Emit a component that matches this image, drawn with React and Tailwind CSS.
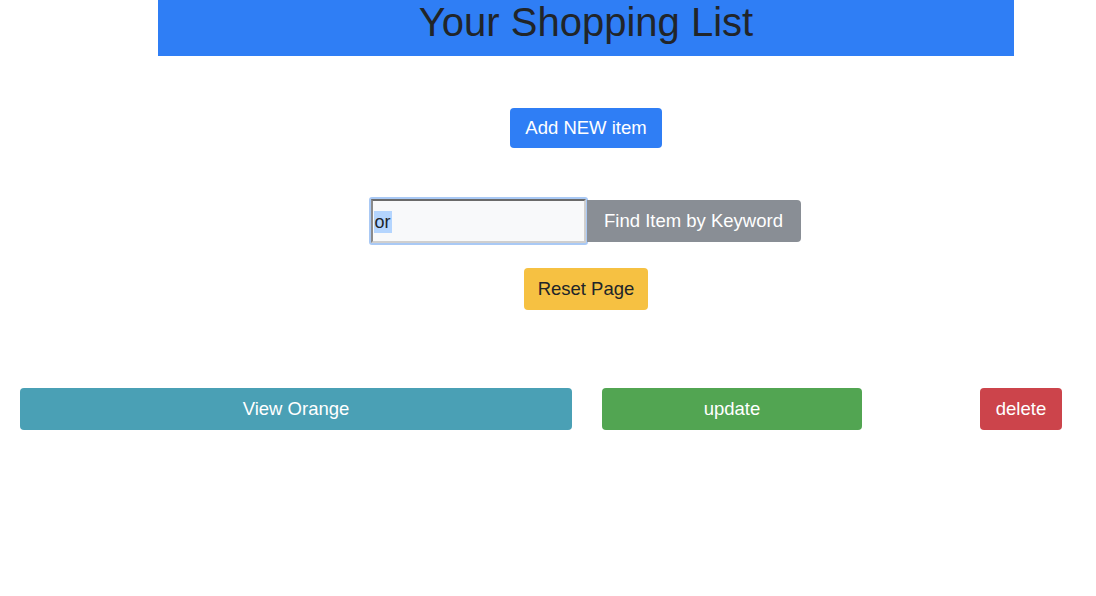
import React from "react";

const font = { fontFamily: '"Liberation Sans", Arial, sans-serif' };

const App = () => {
  return (
    <div className="w-[1096px] h-[596px] bg-white overflow-hidden text-[#212529]" style={font}>
      {/* Header */}
      <div className="ml-[158px] w-[856px] h-[56px] bg-[#2f7ef5] flex justify-center">
        <h1 className="text-[40px] leading-[44px]">Your Shopping List</h1>
      </div>

      <div className="ml-[158px] w-[856px] flex flex-col items-center">
        {/* Add */}
        <button className="mt-[52px] h-[40px] px-[15px] rounded-[4px] bg-[#2f7ef5] text-white text-[18.5px] leading-none">
          Add NEW item
        </button>

        {/* Search */}
        <div className="mt-[49px] mr-[3px] flex items-center">
          <div className="rounded-[3px] p-[2px] bg-[#a9c9f5]">
            <div className="w-[215px] h-[44px] bg-[#f8f9fa] border-2 border-t-[#6a6a6a] border-l-[#8a8a8a] border-b-[#cfcfcf] border-r-[#cfcfcf] flex items-center pl-[1px]">
              <span className="bg-[#b4d5fe] text-[18px] leading-[22px] px-[1px] mt-[1px]">or</span>
            </div>
          </div>
          <button className="-ml-[1px] h-[42px] w-[214px] rounded-r-[4px] bg-[#898e95] text-white text-[18.5px] leading-none">
            Find Item by Keyword
          </button>
        </div>

        {/* Reset */}
        <button className="mt-[23px] h-[42px] w-[124px] rounded-[4px] bg-[#f6c142] text-[#212529] text-[18.5px] leading-none">
          Reset Page
        </button>
      </div>

      {/* Item row */}
      <div className="mt-[78px] ml-[20px] flex items-center">
        <button className="h-[42px] w-[552px] rounded-[4px] bg-[#4aa0b5] text-white text-[18.5px] leading-none">
          View Orange
        </button>
        <button className="ml-[30px] h-[42px] w-[260px] rounded-[4px] bg-[#52a552] text-white text-[18.5px] leading-none">
          update
        </button>
        <button className="ml-[118px] h-[42px] w-[82px] rounded-[4px] bg-[#cc444b] text-white text-[18.5px] leading-none">
          delete
        </button>
      </div>
    </div>
  );
};

export default App;
